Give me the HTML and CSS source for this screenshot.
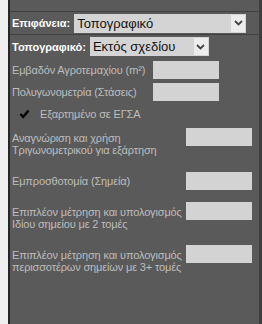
FILE: index.html
```html
<!DOCTYPE html>
<html>
<head>
<meta charset="utf-8">
<link rel="stylesheet" href="styles.css">
</head>
<body>
<div class="app">
  <div class="side"></div>
  <div class="panel">
    <div class="topband"></div>
    <div class="hrow r1">
      <span class="hlabel">Επιφάνεια:</span>
      <div class="sel sel1"><span class="seltext">Τοπογραφικό</span><span class="arrow"><svg width="9" height="6" viewBox="0 0 9 6"><path d="M1 1 L4.5 4.5 L8 1" fill="none" stroke="#444" stroke-width="1.8"/></svg></span></div>
    </div>
    <div class="hrow r2">
      <span class="hlabel">Τοπογραφικό:</span>
      <div class="sel sel2"><span class="seltext">Εκτός σχεδίου</span><span class="arrow"><svg width="9" height="6" viewBox="0 0 9 6"><path d="M1 1 L4.5 4.5 L8 1" fill="none" stroke="#444" stroke-width="1.8"/></svg></span></div>
    </div>
    <div class="form">
      <div class="frow fa"><span class="flabel">Εμβαδόν Αγροτεμαχίου (m²)</span><span class="box"></span></div>
      <div class="frow fb"><span class="flabel">Πολυγωνομετρία (Στάσεις)</span><span class="box"></span></div>
      <div class="check"><span class="cbox"><svg width="11" height="10" viewBox="0 0 11 10"><path d="M1.5 5 L4.2 8 L9.5 1.5" fill="none" stroke="#000" stroke-width="2.4"/></svg></span><span class="flabel">Εξαρτημένο σε ΕΓΣΑ</span></div>
      <div class="frow wide w1"><span class="flabel">Αναγνώριση και χρήση<br>Τριγωνομετρικού για εξάρτηση</span><span class="box"></span></div>
      <div class="frow wide w2"><span class="flabel">Εμπροσθοτομία (Σημεία)</span><span class="box"></span></div>
      <div class="frow wide w3"><span class="flabel">Επιπλέον μέτρηση και υπολογισμός<br>Ιδίου σημείου με 2 τομές</span><span class="box"></span></div>
      <div class="frow wide w4"><span class="flabel">Επιπλέον μέτρηση και υπολογισμός<br>περισσοτέρων σημείων με 3+ τομές</span><span class="box"></span></div>
    </div>
  </div>
</div>
</body>
</html>
```
FILE: styles.css
```css
html, body { margin: 0; padding: 0; }
body { width: 262px; height: 324px; overflow: hidden; font-family: "Liberation Sans", Arial, sans-serif; }
.app { display: flex; height: 324px; }
.side { width: 8px; background: #efefef; border-right: 2px solid #262626; }
.panel { flex: 1; background: #5a5a5a; border-right: 3px solid #3e3e3e; display: flex; flex-direction: column; }
.topband { height: 11px; border-bottom: 1px solid #404040; }
.hrow { display: flex; align-items: center; border-bottom: 1px solid #404040; padding-left: 2px; }
.r1 { height: 22px; }
.r2 { height: 23px; border-bottom: none; }
.hlabel { color: #fff; font-weight: bold; font-size: 11px; margin-right: 4px; }
.sel { display: flex; align-items: center; background: #d4d4d4; height: 19px; color: #111; font-size: 13px; }
.sel1 { width: 172px; }
.sel2 { width: 119px; }
.seltext { flex: 1; padding-left: 3px; }
.arrow { width: 14px; height: 17px; margin-right: 1px; background: #ececec; display: flex; align-items: center; justify-content: center; }
.form { padding-left: 2px; color: #bdbdbd; font-size: 11px; letter-spacing: -0.15px; }
.flabel { line-height: 12px; white-space: nowrap; }
.frow { display: flex; justify-content: space-between; align-items: center; }
.box { width: 66px; height: 18px; background: #d3d3d3; flex: none; }
.fa { margin-top: 3px; width: 207px; }
.fb { margin-top: 4px; width: 207px; }
.check { display: flex; align-items: center; margin-top: 7px; padding-left: 7px; }
.cbox { width: 11px; height: 11px; margin-right: 10px; display: flex; }
.wide { width: 240px; }
.w1 { margin-top: 8px; align-items: flex-start; }
.w1 .flabel { padding-top: 4px; }
.w2 { margin-top: 16px; }
.w3 { margin-top: 12px; align-items: flex-start; }
.w3 .flabel { padding-top: 4px; }
.w4 { margin-top: 15px; align-items: flex-start; }
.w4 .flabel { padding-top: 4px; }
```
